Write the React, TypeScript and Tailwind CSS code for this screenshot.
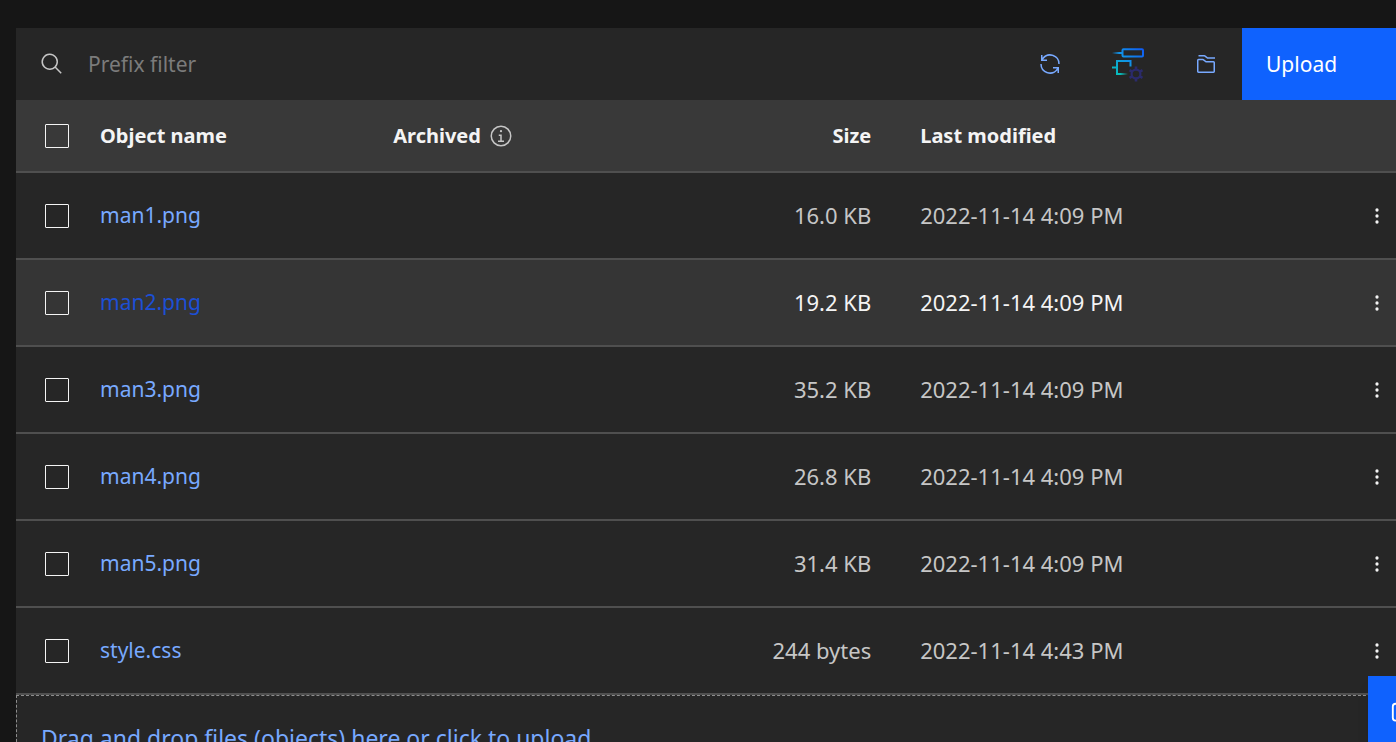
import type { ReactNode } from 'react';

type Row = { name: string; size: string; modified: string; active?: boolean };

const rows: Row[] = [
  { name: 'man1.png', size: '16.0 KB', modified: '2022-11-14 4:09 PM' },
  { name: 'man2.png', size: '19.2 KB', modified: '2022-11-14 4:09 PM', active: true },
  { name: 'man3.png', size: '35.2 KB', modified: '2022-11-14 4:09 PM' },
  { name: 'man4.png', size: '26.8 KB', modified: '2022-11-14 4:09 PM' },
  { name: 'man5.png', size: '31.4 KB', modified: '2022-11-14 4:09 PM' },
  { name: 'style.css', size: '244 bytes', modified: '2022-11-14 4:43 PM' },
];

function Icon({ className, children }: { className: string; children: ReactNode }) {
  return (
    <svg viewBox="0 0 32 32" fill="currentColor" aria-hidden="true" className={className}>
      {children}
    </svg>
  );
}

function Checkbox({ label }: { label: string }) {
  return (
    <input
      type="checkbox"
      aria-label={label}
      className="block size-6 appearance-none rounded-[1px] border border-[#f4f4f4] bg-transparent checked:bg-[#f4f4f4]"
    />
  );
}

function FlowIcon() {
  return (
    <svg width="36" height="36" viewBox="0 0 36 36" fill="none" aria-hidden="true">
      <defs>
        <linearGradient id="flow" gradientUnits="userSpaceOnUse" x1="5" y1="29" x2="33" y2="3">
          <stop offset="0" stopColor="#08bdba" />
          <stop offset="0.5" stopColor="#1192e8" />
          <stop offset="1" stopColor="#0f5cf5" />
        </linearGradient>
        <linearGradient id="fadeTop" gradientUnits="userSpaceOnUse" x1="2" y1="0" x2="11" y2="0">
          <stop offset="0" stopColor="#1192e8" stopOpacity="0" />
          <stop offset="0.8" stopColor="#1192e8" />
        </linearGradient>
        <linearGradient id="fadeLow" gradientUnits="userSpaceOnUse" x1="7" y1="0" x2="18" y2="0">
          <stop offset="0.3" stopColor="#08bdba" />
          <stop offset="1" stopColor="#08bdba" stopOpacity="0" />
        </linearGradient>
      </defs>
      <rect x="12.5" y="3.2" width="20.5" height="7.3" rx="1" stroke="url(#flow)" strokeWidth="2" />
      <rect x="2" y="6" width="10" height="2" fill="url(#fadeTop)" />
      <path d="M7 28V15H20.5V20.5M2 21.5H7" stroke="url(#flow)" strokeWidth="2" />
      <rect x="6" y="27" width="12" height="2" fill="url(#fadeLow)" />
      <circle cx="26" cy="28" r="4.4" stroke="#2b2b6b" strokeWidth="2.2" />
      <path
        d="M26 20.5v3M26 32.5v3M19.5 24.2l2.6 1.5M29.9 30.3l2.6 1.5M32.5 24.2l-2.6 1.5M22.1 30.3l-2.6 1.5"
        stroke="#2b2b6b"
        strokeWidth="2.6"
      />
    </svg>
  );
}

export default function App() {
  return (
    <div className="h-screen overflow-hidden bg-[#161616] pt-7 pl-4 font-['Noto_Sans',sans-serif] text-[21px] leading-7 text-[#c6c6c6]">
      <main className="bg-[#262626]">
        <div className="flex h-18 items-stretch">
          <label className="flex min-w-0 flex-1 items-center gap-6 pl-6">
            <Icon className="size-6 shrink-0">
              <path d="M29,27.5859l-7.5521-7.5521a11.0177,11.0177,0,1,0-1.4141,1.4141L27.5859,29ZM4,13a9,9,0,1,1,9,9A9.01,9.01,0,0,1,4,13Z" />
            </Icon>
            <input
              type="text"
              aria-label="Prefix filter"
              placeholder="Prefix filter"
              className="min-w-0 flex-1 bg-transparent outline-none placeholder:text-[#7b7b7b]"
            />
          </label>
          <button aria-label="Refresh" className="flex w-18 items-center justify-center text-[#78a9ff]">
            <Icon className="size-6">
              <path d="M12 10H6.78A11 11 0 0 1 27 16h2A13 13 0 0 0 6 7.68V4H4v8h8zM20 22h5.22A11 11 0 0 1 5 16H3a13 13 0 0 0 23 8.32V28h2V20H20z" />
            </Icon>
          </button>
          <button aria-label="Manage flow" className="flex w-21 items-center justify-center">
            <FlowIcon />
          </button>
          <button aria-label="Folders" className="flex w-18 items-center justify-center text-[#78a9ff]">
            <Icon className="size-6">
              <path d="M26,28H6a2.0021,2.0021,0,0,1-2-2V11A2.0021,2.0021,0,0,1,6,9h5.6665a2.0119,2.0119,0,0,1,1.2007.4L16.3335,12H26a2.0021,2.0021,0,0,1,2,2V26A2.0021,2.0021,0,0,1,26,28ZM11.6665,11H5.9985L6,26H26V14H15.6665Z" />
              <path d="M28,9H17.6665l-4-3H6V4h7.6665a2.0119,2.0119,0,0,1,1.2007.4L18.3335,7H28Z" />
            </Icon>
          </button>
          <button className="w-[154px] shrink-0 bg-[#0f62fe] pl-6 text-left text-white">Upload</button>
        </div>

        <table className="w-full table-fixed border-separate border-spacing-0">
          <colgroup>
            <col className="w-15" />
            <col className="w-[21.25%]" />
            <col className="w-[19%]" />
            <col />
            <col className="w-[31%]" />
            <col className="w-18" />
          </colgroup>
          <thead>
            <tr className="h-[73px] bg-[#393939] text-left text-xl leading-7 text-[#f4f4f4] *:border-b-2 *:border-[#4f4f4f] *:p-0 *:font-bold">
              <th>
                <div className="pl-[29px]">
                  <Checkbox label="Select all" />
                </div>
              </th>
              <th>
                <div className="pl-6">Object name</div>
              </th>
              <th>
                <div className="flex items-center gap-2 pl-6">
                  Archived
                  <Icon className="size-6 text-[#c6c6c6]">
                    <path d="M17 22V14H13v2h2v6H12v2h8V22zM16 8a1.5 1.5 0 1 0 1.5 1.5A1.5 1.5 0 0 0 16 8z" />
                    <path d="M16 30A14 14 0 1 1 30 16 14 14 0 0 1 16 30zm0-26A12 12 0 1 0 28 16 12 12 0 0 0 16 4z" />
                  </Icon>
                </div>
              </th>
              <th>
                <div className="pr-[25px] text-right">Size</div>
              </th>
              <th>
                <div className="pl-6">Last modified</div>
              </th>
              <th aria-label="Actions" />
            </tr>
          </thead>
          <tbody>
            {rows.map((row) => (
              <tr
                key={row.name}
                className={`h-[87px] *:border-b-2 *:border-[#4f4f4f] *:p-0 ${row.active ? 'bg-[#353535] text-[#f4f4f4]' : ''}`}
              >
                <td>
                  <div className="pl-[29px]">
                    <Checkbox label={`Select ${row.name}`} />
                  </div>
                </td>
                <td>
                  <div className="pb-px pl-6">
                    <a href="#" className={row.active ? 'text-[#1c4fd6]' : 'text-[#78a9ff]'}>
                      {row.name}
                    </a>
                  </div>
                </td>
                <td />
                <td>
                  <div className="pr-[25px] pb-px text-right text-[22px] leading-7">{row.size}</div>
                </td>
                <td>
                  <div className="pb-px pl-6 text-[22px] leading-7">{row.modified}</div>
                </td>
                <td>
                  <button
                    aria-label={`Actions for ${row.name}`}
                    className="ml-auto flex h-10 w-[38px] items-center justify-center text-[#f4f4f4]"
                  >
                    <Icon className="size-6">
                      <circle cx="16" cy="8" r="2.2" />
                      <circle cx="16" cy="16" r="2.2" />
                      <circle cx="16" cy="24" r="2.2" />
                    </Icon>
                  </button>
                </td>
              </tr>
            ))}
          </tbody>
        </table>

        <button className="block w-full border border-r-0 border-dashed border-[#8d8d8d] px-6 py-6 text-left text-[23px] leading-9 text-[#78a9ff]">
          Drag and drop files (objects) here or click to upload
        </button>
      </main>

      <button
        aria-label="Open chat"
        className="fixed right-0 bottom-0 flex h-[66px] w-7 items-center overflow-hidden bg-[#0f62fe] pt-2.5 pl-[22px] text-white shadow-lg"
      >
        <Icon className="size-[30px] shrink-0">
          <path d="M17.74 30L16 29l4-7h6a2 2 0 0 0 2-2V8a2 2 0 0 0-2-2H6a2 2 0 0 0-2 2v12a2 2 0 0 0 2 2h9v2H6a4 4 0 0 1-4-4V8a4 4 0 0 1 4-4h20a4 4 0 0 1 4 4v12a4 4 0 0 1-4 4h-4.84z" />
        </Icon>
      </button>
    </div>
  );
}
